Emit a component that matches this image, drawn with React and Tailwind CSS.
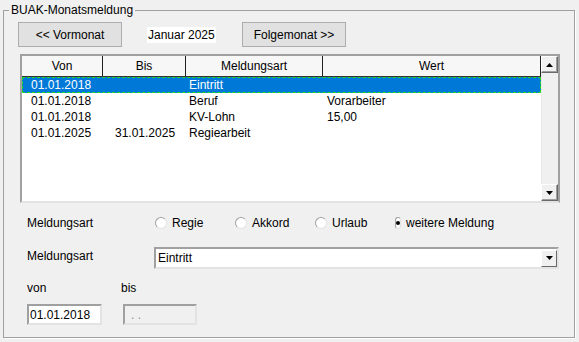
const rows = [
  { von: '01.01.2018', bis: '', art: 'Eintritt', wert: '' },
  { von: '01.01.2018', bis: '', art: 'Beruf', wert: 'Vorarbeiter' },
  { von: '01.01.2018', bis: '', art: 'KV-Lohn', wert: '15,00' },
  { von: '01.01.2025', bis: '31.01.2025', art: 'Regiearbeit', wert: '' },
];

const radios = ['Regie', 'Akkord', 'Urlaub', 'weitere Meldung'];

function Arrow({ down }) {
  return (
    <svg width="7" height="4" viewBox="0 0 7 4">
      <path d={down ? 'M0 0h7L3.5 4z' : 'M0 4h7L3.5 0z'} fill="#000" />
    </svg>
  );
}

function ScrollBtn({ down }) {
  return (
    <div className="flex h-[17px] w-[17px] items-center justify-center border border-t-white border-l-white border-r-[#696969] border-b-[#696969] bg-[#f0f0f0] shadow-[inset_-1px_-1px_0_#a0a0a0]">
      <Arrow down={down} />
    </div>
  );
}

function WinButton({ children }) {
  return (
    <button className="h-[25px] w-[104px] border border-[#adadad] bg-[#e1e1e1] text-[12px] text-black">
      {children}
    </button>
  );
}

function Radio({ label, checked }) {
  return (
    <div className="flex w-[80px] shrink-0 items-center whitespace-nowrap">
      <span className="flex h-[12px] w-[12px] items-center justify-center rounded-full border border-[#a0a0a0] border-b-[#e3e3e3] border-r-[#e3e3e3] bg-white">
        {checked && <span className="h-[4px] w-[4px] rounded-full bg-black" />}
      </span>
      <span className="ml-[5px]">{label}</span>
    </div>
  );
}

export default function App() {
  return (
    <div className="h-[342px] w-[579px] bg-[#f0f0f0] pl-[3px] pt-[3px] font-['Liberation_Sans',Arial,sans-serif] text-[12px] leading-[14px] text-black">
      <fieldset className="h-[335px] w-[572px] border border-[#a0a0a0] shadow-[1px_1px_0_#fff]">
        <legend className="ml-[5px] px-[2px]">BUAK-Monatsmeldung</legend>

        <div className="ml-[14px] mt-[5px] flex items-center">
          <WinButton>&lt;&lt; Vormonat</WinButton>
          <div className="w-[120px]">
            <span className="ml-[25px] bg-white px-[1px] py-[1px]">Januar 2025</span>
          </div>
          <WinButton>Folgemonat &gt;&gt;</WinButton>
        </div>

        <div className="ml-[16px] mt-[7px] flex h-[149px] w-[540px] border-2 border-t-[#a0a0a0] border-l-[#a0a0a0] border-r-[#a0a0a0] border-b-[#e3e3e3] bg-white">
          <div className="flex-1">
            <div className="flex h-[21px] border-b border-[#333] bg-[#f7f7f7]">
              <div className="flex w-[81px] items-center justify-center border-r border-[#222]">Von</div>
              <div className="flex w-[83px] items-center justify-center border-r border-[#222]">Bis</div>
              <div className="flex w-[137px] items-center justify-center border-r border-[#222]">Meldungsart</div>
              <div className="flex w-[218px] items-center justify-center border-r border-[#222]">Wert</div>
            </div>
            {rows.map((r, i) => (
              <div
                key={i}
                className={
                  i === 0
                    ? 'flex h-[16px] items-center border border-dashed border-[#22dd22] bg-[#0078d7] text-white'
                    : 'flex h-[16px] items-center border border-transparent'
                }
              >
                <div className="w-[81px] pl-[8px]">{r.von}</div>
                <div className="w-[83px] pl-[11px]">{r.bis}</div>
                <div className="w-[137px] pl-[2px]">{r.art}</div>
                <div className="w-[216px] pl-[3px]">{r.wert}</div>
              </div>
            ))}
          </div>
          <div className="flex w-[17px] flex-col bg-[#f0f0f0]">
            <ScrollBtn />
            <div className="flex-1 border-l border-[#e8e8e8]" />
            <ScrollBtn down />
          </div>
        </div>

        <div className="ml-[23px] mt-[13px] flex items-center">
          <div className="w-[128px]">Meldungsart</div>
          {radios.map((r) => (
            <Radio key={r} label={r} checked={r === 'weitere Meldung'} />
          ))}
        </div>

        <div className="ml-[23px] mt-[17px] flex items-start">
          <div className="mt-[2px] w-[127px]">Meldungsart</div>
          <div className="flex h-[22px] w-[405px] items-center border-2 border-t-[#a0a0a0] border-l-[#a0a0a0] border-r-[#e3e3e3] border-b-[#e3e3e3] bg-white">
            <span className="ml-[2px] flex-1">Eintritt</span>
            <div className="flex h-[17px] w-[16px] items-center justify-center border border-t-white border-l-white border-r-[#696969] border-b-[#696969] bg-[#f0f0f0]">
              <Arrow down />
            </div>
          </div>
        </div>

        <div className="ml-[23px] mt-[12px] flex">
          <div className="w-[94px]">von</div>
          <div>bis</div>
        </div>

        <div className="ml-[23px] mt-[9px] flex">
          <div className="flex h-[21px] w-[75px] items-center border-2 border-t-[#a0a0a0] border-l-[#a0a0a0] border-r-[#e3e3e3] border-b-[#e3e3e3] bg-white pl-[1px]">
            01.01.2018
          </div>
          <div className="ml-[21px] flex h-[21px] w-[74px] items-center border-2 border-t-[#a0a0a0] border-l-[#a0a0a0] border-r-[#e3e3e3] border-b-[#e3e3e3] bg-[#f0f0f0] pl-[6px] text-[#8a8a8a]">
            . .
          </div>
        </div>
      </fieldset>
    </div>
  );
}
